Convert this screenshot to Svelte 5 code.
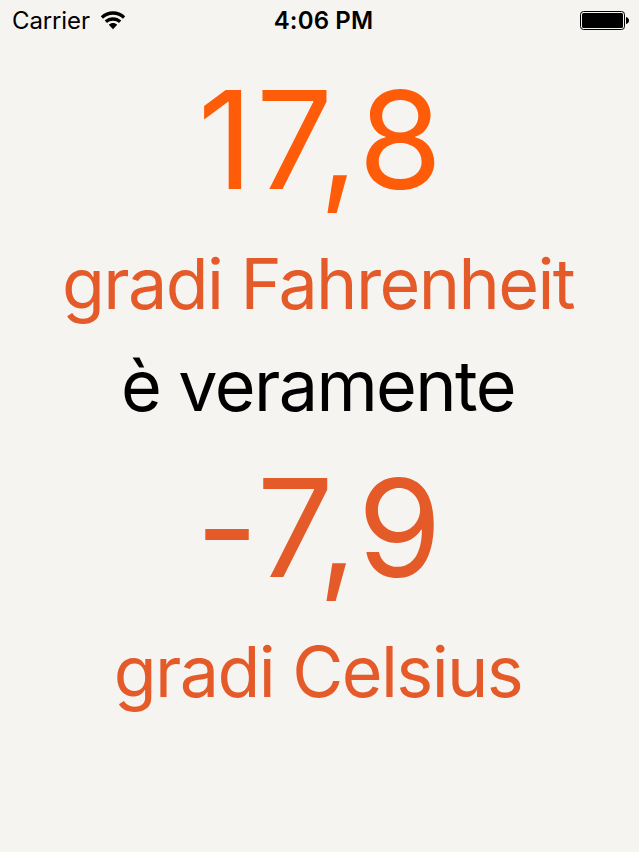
<script>
  const lines = [
    { text: '17,8', kind: 'value bright' },
    { text: 'gradi Fahrenheit', kind: 'unit orange' },
    { text: 'è veramente', kind: 'unit' },
    { text: '-7,9', kind: 'value orange result' },
    { text: 'gradi Celsius', kind: 'unit orange' }
  ];
</script>

<main>
  <header>
    <div class="carrier">
      <span>Carrier</span>
      <svg width="26" height="20" viewBox="0 0 26 20">
        <path d="M.8 5.3C7.5-1.3 18.5-1.3 25.2 5.3L23 7.7C17.5 2.4 8.5 2.4 3 7.7Z" />
        <path d="M4.7 9.6C9.4 5.1 16.6 5.1 21.3 9.6L19 12C15.6 9 10.4 9 7 12Z" />
        <path d="M8.8 13.8C11.2 11.4 14.8 11.4 17.2 13.8L13 18.2Z" />
      </svg>
    </div>
    <time>4:06 PM</time>
    <svg class="battery" width="50" height="20" viewBox="0 0 50 20">
      <rect x=".5" y=".5" width="44" height="18" rx="3" fill="none" stroke="#000" />
      <rect x="2" y="2" width="41" height="15" rx="1.5" />
      <path d="M46 6Q49 7 49 9.5Q49 12 46 13Z" />
    </svg>
  </header>
  <section>
    {#each lines as line}
      <div class={line.kind}>{line.text}</div>
    {/each}
  </section>
</main>

<style>
  :global(body) { background: #f6f4f1; }
  main { width: 639px; height: 852px; overflow: hidden; background: #f6f4f1; font-family: Inter, sans-serif; color: #000; }
  header { box-sizing: border-box; height: 40px; display: grid; grid-template-columns: 1fr auto 1fr; align-items: center; padding: 1px 9px 0 12px; font-size: 24px; line-height: 39px; }
  .carrier { display: flex; align-items: center; gap: 10px; letter-spacing: -.12px; }
  time { font-weight: 600; letter-spacing: .15px; padding-left: 5px; }
  .battery { justify-self: end; }
  section { text-align: center; white-space: nowrap; }
  .value { height: 193px; line-height: 199px; font-size: 136px; }
  .unit { height: 102px; line-height: 102px; font-size: 70px; letter-spacing: -1.6px; padding-right: 3px; }
  .bright { color: #ff5c0a; letter-spacing: 3px; padding-left: 4px; }
  .orange { color: #e45b29; }
  .result { margin-top: -9px; letter-spacing: 1.3px; }
</style>
